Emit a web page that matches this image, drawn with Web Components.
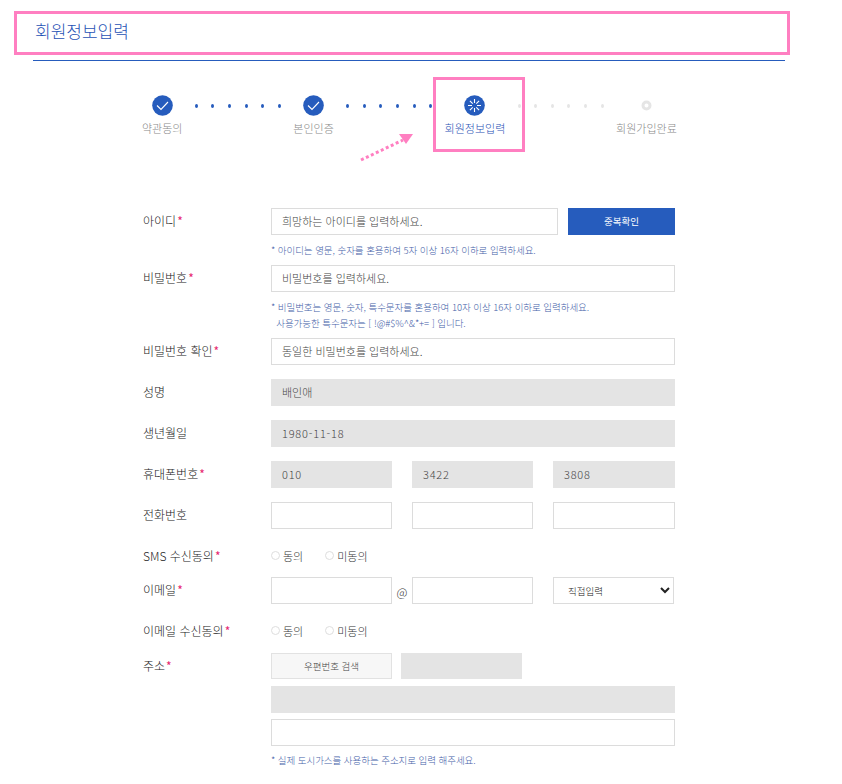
<!DOCTYPE html>
<html lang="ko">
<head>
<meta charset="utf-8">
<title>회원정보입력</title>
<style>
  html, body { margin: 0; background: #fff; }
  body { font-family: "Noto Sans CJK KR", "Noto Sans", sans-serif; font-weight: 300; color: #333; }
</style>
</head>
<body>
<signup-page>
  <page-title>회원정보입력</page-title>
  <sign-steps>
    <sign-step state="done">약관동의</sign-step>
    <step-dots></step-dots>
    <sign-step state="done">본인인증</sign-step>
    <step-dots></step-dots>
    <sign-step state="current">회원정보입력</sign-step>
    <step-dots off></step-dots>
    <sign-step>회원가입완료</sign-step>
  </sign-steps>
  <sign-form>
    <form-row label="아이디" required tight>
      <div style="display:flex;gap:10px">
        <text-field style="flex:1">희망하는 아이디를 입력하세요.</text-field>
        <form-button primary style="width:107px">중복확인</form-button>
      </div>
      <form-hint>* 아이디는 영문, 숫자를 혼용하여 5자 이상 16자 이하로 입력하세요.</form-hint>
    </form-row>
    <form-row label="비밀번호" required tight>
      <text-field>비밀번호를 입력하세요.</text-field>
      <form-hint>* 비밀번호는 영문, 숫자, 특수문자를 혼용하여 10자 이상 16자 이하로 입력하세요.<br>&nbsp;&nbsp;사용가능한 특수문자는 [ !@#$%^&amp;*+= ] 입니다.</form-hint>
    </form-row>
    <form-row label="비밀번호 확인" required>
      <text-field>동일한 비밀번호를 입력하세요.</text-field>
    </form-row>
    <form-row label="성명">
      <text-field off>배인애</text-field>
    </form-row>
    <form-row label="생년월일">
      <text-field off digits>1980-11-18</text-field>
    </form-row>
    <form-row label="휴대폰번호" required>
      <div style="display:flex;gap:20px">
        <text-field off digits style="width:121px">010</text-field>
        <text-field off digits style="width:121px">3422</text-field>
        <text-field off digits style="flex:1">3808</text-field>
      </div>
    </form-row>
    <form-row label="전화번호">
      <div style="display:flex;gap:20px">
        <text-field style="width:121px"></text-field>
        <text-field style="width:121px"></text-field>
        <text-field style="flex:1"></text-field>
      </div>
    </form-row>
    <form-row label="SMS 수신동의" required tight>
      <radio-pair></radio-pair>
    </form-row>
    <form-row label="이메일" required>
      <div style="display:flex">
        <text-field style="width:121px"></text-field>
        <span style="width:20px;text-align:center;font-size:12px;line-height:30px;height:27px">@</span>
        <text-field style="width:121px"></text-field>
        <select-field style="margin-left:20px;width:121px">직접입력</select-field>
      </div>
    </form-row>
    <form-row label="이메일 수신동의" required style="margin-bottom:8px">
      <radio-pair></radio-pair>
    </form-row>
    <form-row label="주소" required>
      <div style="display:flex;gap:9px;margin-bottom:7px">
        <form-button style="width:121px">우편번호 검색</form-button>
        <text-field off short style="width:121px"></text-field>
      </div>
      <text-field off style="margin-bottom:6px"></text-field>
      <text-field></text-field>
      <form-hint style="margin-top:6px">* 실제 도시가스를 사용하는 주소지로 입력 해주세요.</form-hint>
    </form-row>
  </sign-form>
  <pink-mark style="left:14px;top:11px;width:776px;height:44px"></pink-mark>
  <pink-mark style="left:433px;top:77px;width:92px;height:75px"></pink-mark>
  <pink-arrow></pink-arrow>
</signup-page>

<script>
  const BLUE = '#265cbd';

  class SignupPage extends HTMLElement {
    constructor() {
      super();
      this.attachShadow({ mode: 'open' }).innerHTML = `
        <style>
          :host { display: block; position: relative; width: 842px; height: 784px; overflow: hidden; }
        </style>
        <slot></slot>`;
    }
  }

  class PageTitle extends HTMLElement {
    constructor() {
      super();
      this.attachShadow({ mode: 'open' }).innerHTML = `
        <style>
          :host {
            display: block; margin: 0 57px 0 33px; padding: 19px 2px 17px;
            height: 24px; line-height: 24px;
            font-size: 17px; color: #1f52b5;
            border-bottom: 1px solid ${BLUE};
          }
        </style>
        <slot></slot>`;
    }
  }

  class SignSteps extends HTMLElement {
    constructor() {
      super();
      this.attachShadow({ mode: 'open' }).innerHTML = `
        <style>
          :host { display: flex; gap: 12.4px; margin: 34px 0 72px 142px; }
        </style>
        <slot></slot>`;
    }
  }

  class SignStep extends HTMLElement {
    constructor() {
      super();
      const state = this.getAttribute('state');
      let icon = '<circle cx="10.5" cy="10.5" r="3.5" fill="#fff" stroke="#e5e5e5" stroke-width="3"/>';
      if (state === 'done') {
        icon = `<circle cx="10.5" cy="10.5" r="10.3" fill="${BLUE}"/>
          <path d="M5 10.5l4 4 7-7.5" fill="none" stroke="#fff" stroke-width="1.1"/>`;
      } else if (state === 'current') {
        icon = `<circle cx="10.5" cy="10.5" r="10.3" fill="${BLUE}"/>
          <path d="M10.5 4v4M10.5 13v4M4 10.5h4M13 10.5h4M5.9 5.9l2.8 2.8M12.3 12.3l2.8 2.8M15.1 5.9l-2.8 2.8M8.7 12.3l-2.8 2.8" fill="none" stroke="#fff" stroke-width="1.1"/>`;
      }
      this.attachShadow({ mode: 'open' }).innerHTML = `
        <style>
          :host { display: flex; flex-direction: column; align-items: center; font-size: 11px; color: #888; }
          :host([state="current"]) { color: #1f52b5; }
          svg { display: block; width: 21px; height: 21px; margin-bottom: 4px; }
          span { line-height: 16px; white-space: nowrap; }
        </style>
        <svg viewBox="0 0 21 21">${icon}</svg>
        <span><slot></slot></span>`;
    }
  }

  class StepDots extends HTMLElement {
    constructor() {
      super();
      this.attachShadow({ mode: 'open' }).innerHTML = `
        <style>
          :host { display: flex; justify-content: space-between; width: 86px; height: 21px; align-items: center; color: ${BLUE}; }
          :host([off]) { color: #e5e5e5; }
          i { display: block; width: 3px; height: 4px; border-radius: 50%; background: currentColor; }
        </style>
        <i></i><i></i><i></i><i></i><i></i><i></i>`;
    }
  }

  class SignForm extends HTMLElement {
    constructor() {
      super();
      this.attachShadow({ mode: 'open' }).innerHTML = `
        <style>
          :host { display: block; margin-left: 143px; width: 532px; }
        </style>
        <slot></slot>`;
    }
  }

  class FormRow extends HTMLElement {
    constructor() {
      super();
      const star = this.hasAttribute('required') ? '<b>*</b>' : '';
      this.attachShadow({ mode: 'open' }).innerHTML = `
        <style>
          :host { display: grid; grid-template-columns: 128px 1fr; margin-bottom: 14px; }
          :host([tight]) { margin-bottom: 7px; }
          .name { font-size: 12px; line-height: 25px; color: #222; white-space: nowrap; }
          b { font-weight: 400; color: #e6266f; margin-left: 1px; }
        </style>
        <div class="name">${this.getAttribute('label')}${star}</div>
        <div class="body"><slot></slot></div>`;
    }
  }

  class TextField extends HTMLElement {
    constructor() {
      super();
      this.attachShadow({ mode: 'open' }).innerHTML = `
        <style>
          :host {
            display: block; box-sizing: border-box; height: 27px; padding: 0 10px;
            border: 1px solid #dcdcdc; background: #fff;
            font-size: 11px; line-height: 25px; color: #444; white-space: nowrap;
          }
          :host([off]) { background: #e4e4e4; border-color: #e4e4e4; }
          :host([short]) { height: 26px; }
          :host([digits]) { letter-spacing: 0.8px; }
        </style>
        <slot></slot>`;
    }
  }

  class SelectField extends HTMLElement {
    constructor() {
      super();
      this.attachShadow({ mode: 'open' }).innerHTML = `
        <style>
          :host { display: block; height: 27px; }
          select {
            display: block; box-sizing: border-box; width: 100%; height: 27px; padding: 0 10px;
            border: 1px solid #dcdcdc; border-radius: 0; background: #fff;
            font: 300 9.5px "Noto Sans CJK KR", sans-serif; color: #222;
          }
        </style>
        <select><option>${this.textContent}</option></select>`;
    }
  }

  class FormButton extends HTMLElement {
    constructor() {
      super();
      this.attachShadow({ mode: 'open' }).innerHTML = `
        <style>
          :host {
            display: block; box-sizing: border-box; height: 26px; text-align: center;
            border: 1px solid #e2e2e2; background: #f7f7f7;
            font-size: 9.5px; line-height: 24px; color: #444; white-space: nowrap;
          }
          :host([primary]) { height: 27px; line-height: 25px; background: ${BLUE}; border-color: ${BLUE}; color: #fff; font-weight: 400; }
        </style>
        <slot></slot>`;
    }
  }

  class FormHint extends HTMLElement {
    constructor() {
      super();
      this.attachShadow({ mode: 'open' }).innerHTML = `
        <style>
          :host { display: block; margin-top: 7px; font-size: 9.5px; letter-spacing: -0.05px; line-height: 16px; color: #4460a8; white-space: nowrap; }
        </style>
        <slot></slot>`;
    }
  }

  class RadioPair extends HTMLElement {
    constructor() {
      super();
      this.attachShadow({ mode: 'open' }).innerHTML = `
        <style>
          :host { display: flex; box-sizing: border-box; height: 27px; padding-bottom: 2px; align-items: center; font-size: 11px; color: #333; }
          label { display: flex; align-items: center; gap: 3px; margin-right: 22px; }
          i { box-sizing: border-box; width: 9px; height: 9px; border: 1px solid #dedede; border-radius: 50%; }
        </style>
        <label><i></i>동의</label>
        <label><i></i>미동의</label>`;
    }
  }

  class PinkMark extends HTMLElement {
    constructor() {
      super();
      this.attachShadow({ mode: 'open' }).innerHTML = `
        <style>
          :host { position: absolute; box-sizing: border-box; border: 3px solid #ff7fc1; }
        </style>`;
    }
  }

  class PinkArrow extends HTMLElement {
    constructor() {
      super();
      this.attachShadow({ mode: 'open' }).innerHTML = `
        <style>
          :host { position: absolute; left: 355px; top: 130px; }
          svg { display: block; }
        </style>
        <svg width="62" height="34" viewBox="0 0 62 34">
          <path d="M6 30L48 10" fill="none" stroke="#ff7fc1" stroke-width="3" stroke-dasharray="3 2.5"/>
          <path d="M44 4h14l-7 10z" fill="#ff7fc1"/>
        </svg>`;
    }
  }

  customElements.define('signup-page', SignupPage);
  customElements.define('page-title', PageTitle);
  customElements.define('sign-steps', SignSteps);
  customElements.define('sign-step', SignStep);
  customElements.define('step-dots', StepDots);
  customElements.define('sign-form', SignForm);
  customElements.define('form-row', FormRow);
  customElements.define('text-field', TextField);
  customElements.define('select-field', SelectField);
  customElements.define('form-button', FormButton);
  customElements.define('form-hint', FormHint);
  customElements.define('radio-pair', RadioPair);
  customElements.define('pink-mark', PinkMark);
  customElements.define('pink-arrow', PinkArrow);
</script>
</body>
</html>
